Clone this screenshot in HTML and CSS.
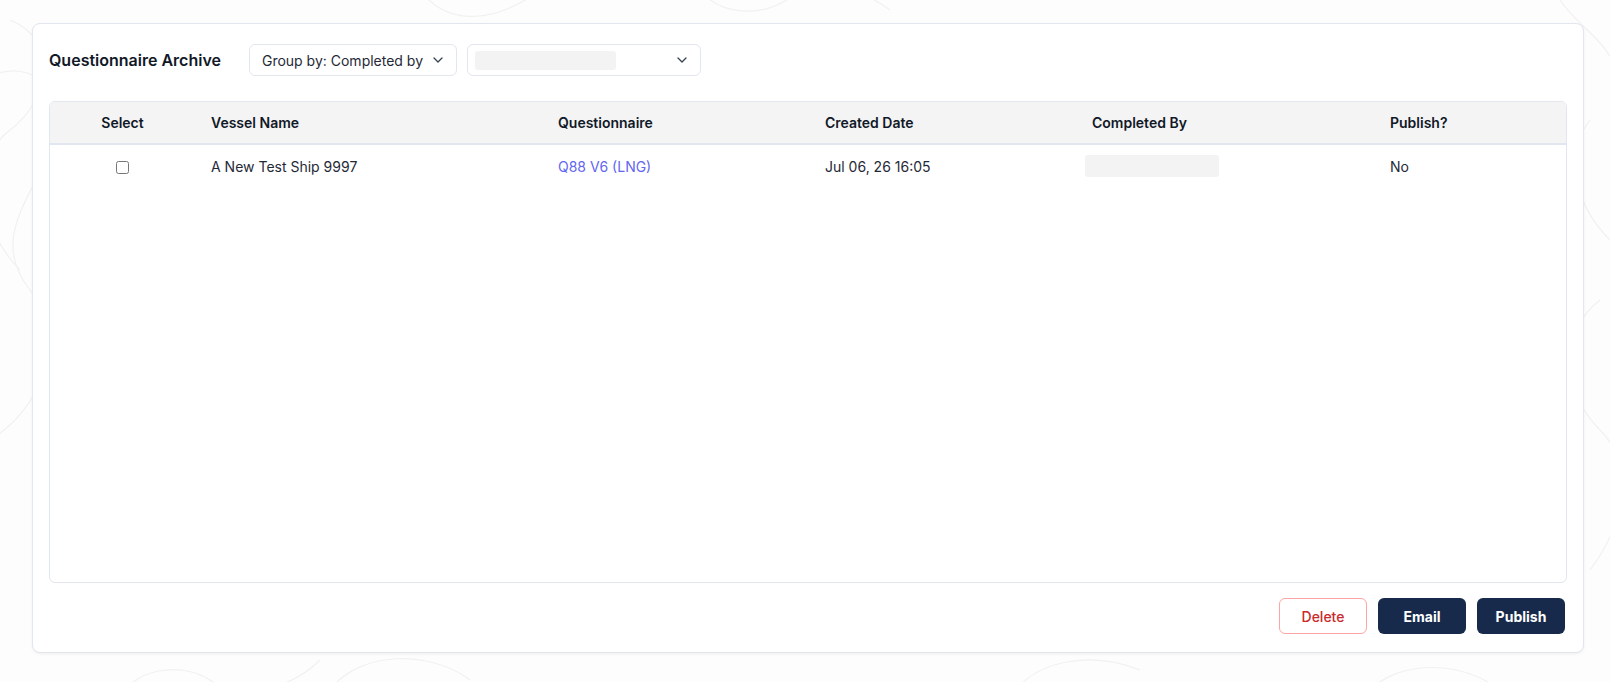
FILE: index.html
```html
<!DOCTYPE html>
<html lang="en">
<head>
    <meta charset="UTF-8">
    <meta name="viewport" content="width=device-width, initial-scale=1.0">
    <title>Questionnaire Archive</title>
    <link rel="stylesheet" href="styles.css">
</head>
<body>

<main class="page">
    <section class="card">
        <div class="toolbar">
            <h2 class="title">Questionnaire Archive</h2>

            <button class="select select-group" type="button">
                <span>Group by: Completed by</span>
                <svg class="chevron" width="10" height="6" viewBox="0 0 10 6"><path d="M1 1l4 4 4-4" fill="none" stroke="#374151" stroke-width="1.3" stroke-linecap="round" stroke-linejoin="round"/></svg>
            </button>

            <button class="select select-value" type="button">
                <span class="blank blank-select"></span>
                <svg class="chevron" width="10" height="6" viewBox="0 0 10 6"><path d="M1 1l4 4 4-4" fill="none" stroke="#374151" stroke-width="1.3" stroke-linecap="round" stroke-linejoin="round"/></svg>
            </button>
        </div>

        <div class="table">
            <div class="row head">
                <div class="cell center">Select</div>
                <div class="cell">Vessel Name</div>
                <div class="cell">Questionnaire</div>
                <div class="cell">Created Date</div>
                <div class="cell">Completed By</div>
                <div class="cell">Publish?</div>
            </div>
            <div class="row">
                <div class="cell center"><input type="checkbox" class="check"></div>
                <div class="cell">A New Test Ship 9997</div>
                <div class="cell"><a href="#" class="link">Q88 V6 (LNG)</a></div>
                <div class="cell">Jul 06, 26 16:05</div>
                <div class="cell"><span class="blank blank-cell"></span></div>
                <div class="cell">No</div>
            </div>
        </div>

        <div class="actions">
            <button class="btn btn-delete" type="button">Delete</button>
            <button class="btn btn-dark" type="button">Email</button>
            <button class="btn btn-dark" type="button">Publish</button>
        </div>
    </section>
</main>

</body>
</html>
```

FILE: styles.css
```css
/* Reset */
* {
    margin: 0;
    padding: 0;
    box-sizing: border-box;
}

body {
    font-family: Inter, "Noto Sans", Arial, sans-serif;
    font-size: 14px;
    color: #1f2937;
    background-color: #fdfdfd;
    background-image: url("data:image/svg+xml,%3Csvg xmlns='http://www.w3.org/2000/svg' width='1610' height='682' fill='none' stroke='%23f1f1f3' stroke-width='1.2'%3E%3Cpath d='M-20 80c60-30 90 20 70 70s-60 90-20 140 10 120-40 150'/%3E%3Cpath d='M10 20c50 20 40 80 0 110s-30 100 10 140'/%3E%3Cpath d='M420 -10c30 40 80 30 120 0'/%3E%3Cpath d='M700 -10c20 25 60 28 90 8s70-10 100 12'/%3E%3Cpath d='M1590 120c-30 40-10 90 20 120'/%3E%3Cpath d='M1600 300c-40 30-40 90 0 130s20 100-10 140'/%3E%3Cpath d='M1560 0c20 30 50 40 60 80'/%3E%3Cpath d='M120 700c10-30 60-40 90-20s80 10 110-20'/%3E%3Cpath d='M330 690c30-40 100-40 140-10'/%3E%3Cpath d='M1010 700c20-40 80-50 130-30'/%3E%3Cpath d='M1370 690c30-30 90-30 130 0'/%3E%3C/svg%3E");
}

.page {
    padding: 23px 26px 29px 32px;
}

/* Karta */
.card {
    height: 630px;
    background-color: #fff;
    border: 1px solid #e2e6ee;
    border-radius: 8px;
    box-shadow: 0 1px 3px rgba(15, 23, 42, 0.06);
    padding: 20px 16px 18px 16px;
    display: flex;
    flex-direction: column;
}

.toolbar {
    display: flex;
    align-items: center;
    height: 32px;
}

.title {
    font-size: 16px;
    font-weight: 600;
    color: #111827;
    margin-right: 28px;
}

.select {
    height: 32px;
    display: flex;
    align-items: center;
    justify-content: space-between;
    background: #fff;
    border: 1px solid #e2e6ee;
    border-radius: 6px;
    font-family: inherit;
    font-size: 14px;
    color: #1f2937;
    padding: 0 13px 0 12px;
}

.select-group {
    width: 208px;
    margin-right: 10px;
}

.select-value {
    width: 234px;
    padding-left: 7px;
}

.blank {
    display: block;
    background-color: #f3f3f4;
    border-radius: 3px;
}

.blank-select {
    width: 141px;
    height: 19px;
}

.blank-cell {
    width: 134px;
    height: 22px;
    margin-left: -7px;
}

/* Tabulka */
.table {
    margin-top: 25px;
    height: 482px;
    border: 1px solid #e2e6ee;
    border-radius: 6px;
    overflow: hidden;
}

.row {
    display: grid;
    grid-template-columns: 145px 347px 267px 267px 298px 1fr;
    align-items: center;
    height: 42px;
}

.row.head {
    height: 43px;
    background-color: #f4f4f5;
    border-bottom: 2px solid #e2e6ee;
    font-weight: 600;
    color: #111827;
}

.cell {
    padding-left: 16px;
}

.cell.center {
    padding-left: 0;
    text-align: center;
}

.check {
    width: 13px;
    height: 13px;
    margin: 0;
    vertical-align: middle;
}

.link {
    color: #6366f1;
    text-decoration: none;
}

/* Tlačítka */
.actions {
    margin-top: auto;
    display: flex;
    justify-content: flex-end;
    gap: 11px;
    padding-right: 2px;
}

.btn {
    width: 88px;
    height: 36px;
    border-radius: 6px;
    font-family: inherit;
    font-size: 14px;
    cursor: pointer;
}

.btn-delete {
    background-color: #fff;
    border: 1px solid #fca5a5;
    color: #c92a2a;
    font-weight: 500;
}

.btn-dark {
    background-color: #172a4b;
    border: none;
    color: #fff;
    font-weight: 700;
}
```
